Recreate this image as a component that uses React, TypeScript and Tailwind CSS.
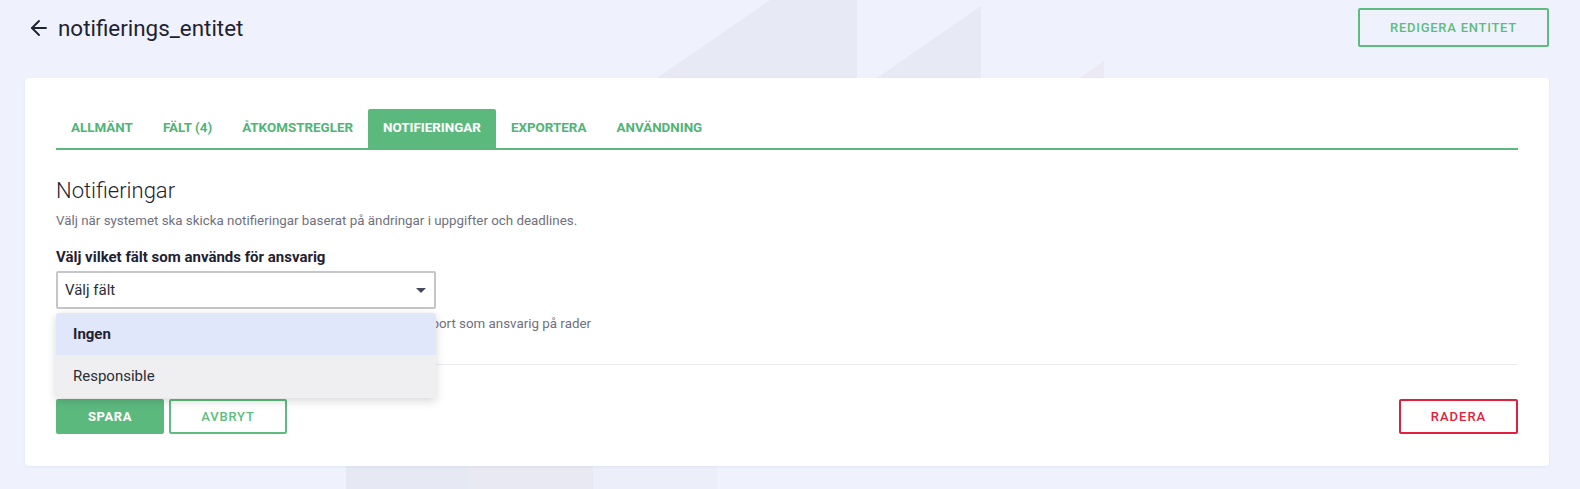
import React from "react";

function ArrowLeft() {
  return (
    <svg width="24" height="24" viewBox="0 0 24 24" fill="none" stroke="#1f2230" strokeWidth="1.9" strokeLinecap="round" strokeLinejoin="round">
      <path d="m12 19-7-7 7-7" />
      <path d="M19 12H5" />
    </svg>
  );
}

function Background() {
  return (
    <svg className="absolute inset-0 pointer-events-none" width="1580" height="489" viewBox="0 0 1580 489">
      <polygon points="657,78 770,0 857,0 857,440 657,440" fill="#e7eaf5" />
      <polygon points="877,78 981,6 981,440 877,440" fill="#e7eaf5" />
      <polygon points="1080,78 1104,61 1104,440 1080,440" fill="#eae9f4" />
      <rect x="346" y="300" width="123" height="189" fill="#e6e9f4" />
      <rect x="469" y="300" width="124" height="189" fill="#e9e9f4" />
      <rect x="593" y="300" width="124" height="189" fill="#eceff9" />
    </svg>
  );
}

const tabs = ["ALLMÄNT", "FÄLT (4)", "ÅTKOMSTREGLER", "NOTIFIERINGAR", "EXPORTERA", "ANVÄNDNING"];

export default function App() {
  return (
    <div className="relative min-h-[489px] w-full overflow-hidden bg-[#eff2fd] font-['Roboto','Liberation_Sans',sans-serif] text-[#1f2230]">
      <Background />
      <div className="relative pl-[25px] pr-[31px]">
        <div className="flex items-start justify-between pt-[8px]">
          <div className="flex h-[39px] items-center gap-[7px] pl-[2px]">
            <ArrowLeft />
            <span className="text-[22.4px] leading-[26px] text-[#1f2230]">notifierings_entitet</span>
          </div>
          <button className="flex h-[39px] w-[191px] items-center justify-center rounded-[2px] border-2 border-[#5cbd7c] text-[13px] font-medium tracking-[0.75px] text-[#5cbd7c]">
            REDIGERA ENTITET
          </button>
        </div>

        <div className="mt-[31px] rounded-[3px] bg-white px-[31px] pt-[31px] pb-[32px] shadow-[0_1px_3px_rgba(40,50,90,0.06)]">
          <div className="flex border-b-2 border-[#5cb97e]">
            {tabs.map((t) => {
              const active = t === "NOTIFIERINGAR";
              return (
                <div
                  key={t}
                  className={
                    active
                      ? "flex h-[39px] items-center rounded-t-[2px] bg-[#5cb97e] px-[15px] text-[13.4px] font-bold text-white"
                      : "flex h-[39px] items-center px-[15px] text-[13.4px] font-bold text-[#50b477]"
                  }
                >
                  {t}
                </div>
              );
            })}
          </div>

          <h2 className="mt-[28px] text-[22px] font-light leading-[26px] text-[#1f2230]">Notifieringar</h2>
          <p className="mt-[8px] text-[13.35px] leading-[18px] text-[#6f7180]">
            Välj när systemet ska skicka notifieringar baserat på ändringar i uppgifter och deadlines.
          </p>

          <div className="mt-[18px] text-[15px] font-bold leading-[18px] text-[#1f2230]">
            Välj vilket fält som används för ansvarig
          </div>

          <div className="relative mt-[5px] w-[380px]">
            <div className="flex h-[38px] items-center justify-between rounded-[2px] border-2 border-[#c6c6c8] bg-white pl-[7px] pr-[8px]">
              <span className="text-[15px] text-[#2b2d38]">Välj fält</span>
              <svg width="10" height="5" viewBox="0 0 10 5">
                <polygon points="0,0 10,0 5,5" fill="#444a5a" />
              </svg>
            </div>
            <div className="absolute left-0 top-[42px] z-10 w-[380px] overflow-hidden rounded-[3px] shadow-[0_3px_10px_rgba(0,0,0,0.16)]">
              <div className="flex h-[42px] items-center bg-[#e1e7fa] px-[17px] text-[15px] font-bold text-[#1f2230]">Ingen</div>
              <div className="flex h-[43px] items-center bg-[#efeff1] px-[17px] text-[15px] text-[#2b2d38]">Responsible</div>
            </div>
          </div>

          <p className="mt-[6px] text-[13.35px] leading-[18px] text-[#6f7180]">
            Användaren som anges i fältet får notifieringar och tas därefter bort som ansvarig på rader
          </p>

          <div className="mt-[31px] h-px bg-[#ebebee]" />

          <div className="mt-[34px] flex items-center justify-between">
            <div className="flex items-center gap-[5px]">
              <button className="h-[35px] w-[108px] rounded-[2px] bg-[#5cb97e] text-[13px] font-bold tracking-[0.6px] text-white">SPARA</button>
              <button className="h-[35px] w-[118px] rounded-[2px] border-2 border-[#5cbd7c] text-[13px] font-medium tracking-[0.8px] text-[#5cbd7c]">AVBRYT</button>
            </div>
            <button className="h-[35px] w-[119px] rounded-[2px] border-2 border-[#e3203c] text-[13px] font-medium tracking-[1px] text-[#e3203c]">RADERA</button>
          </div>
        </div>
      </div>
    </div>
  );
}
